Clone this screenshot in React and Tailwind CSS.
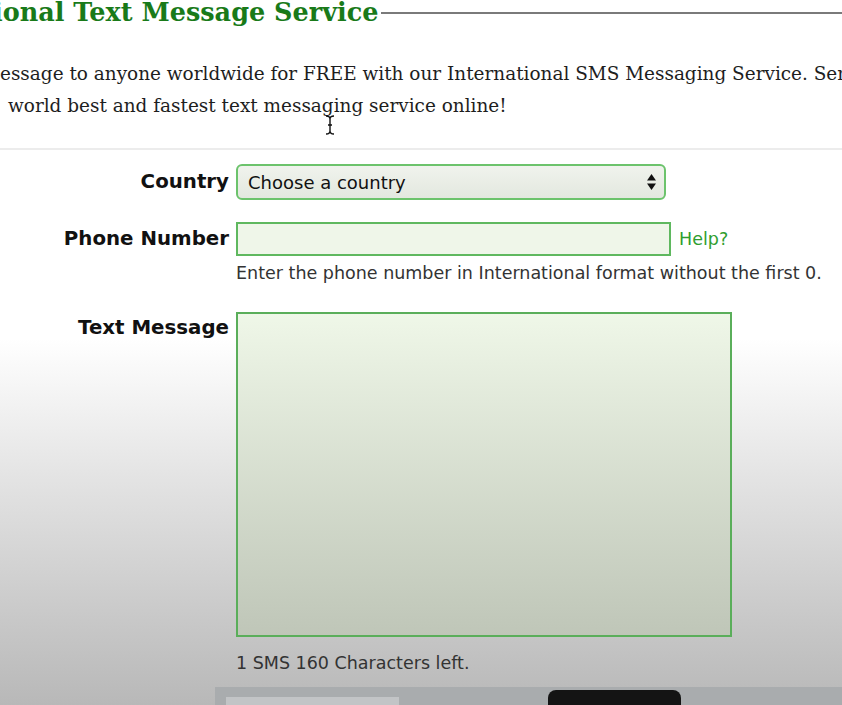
import React from "react";

function SelectArrows() {
  return (
    <svg width="11" height="18" viewBox="0 0 11 18" className="shrink-0">
      <path d="M5.5 1 L10 7.5 L1 7.5 Z" fill="#111" />
      <path d="M5.5 17 L10 10.5 L1 10.5 Z" fill="#111" />
    </svg>
  );
}

function IBeam() {
  return (
    <svg
      width="12"
      height="22"
      viewBox="0 0 12 22"
      className="absolute left-[324px] top-[114px]"
    >
      <path
        d="M2 2 Q6 2 6 5 Q6 2 10 2 M6 5 L6 17 M2 20 Q6 20 6 17 Q6 20 10 20 M4 11 L8 11"
        stroke="#111"
        strokeWidth="1.4"
        fill="none"
      />
    </svg>
  );
}

export default function App() {
  return (
    <div className="relative flex h-[705px] w-full flex-col overflow-hidden bg-linear-to-b from-white from-[48%] to-[#b8b8b8] font-['DejaVu_Sans',sans-serif]">
      {/* Fieldset legend + top border */}
      <div className="flex h-[25px] items-center">
        <h1 className="ml-[-7px] whitespace-nowrap font-['DejaVu_Serif',serif] text-[25.5px] font-bold leading-none text-[#197a19]">
          ional Text Message Service
        </h1>
        <div className="ml-[3px] mt-[1px] h-[2px] flex-1 bg-[#7a7a7a]"></div>
      </div>

      {/* Intro paragraph */}
      <div className="mt-[33px] font-['DejaVu_Serif',serif] text-[18.45px] leading-[32px] text-[#1e1e1e]">
        <p className="whitespace-nowrap">
          essage to anyone worldwide for FREE with our International SMS Messaging Service. Send
        </p>
        <p className="whitespace-nowrap pl-[8px]">
          world best and fastest text messaging service online!
        </p>
      </div>

      <div className="mt-[26px] h-[2px] w-full bg-[#ececec]"></div>

      {/* Form */}
      <div className="mt-[14px] grid grid-cols-[229px_1fr] gap-x-[7px]">
        <label className="flex h-[36px] items-center justify-end text-[19.8px] font-bold text-[#111]">
          Country
        </label>
        <div className="flex h-[36px] w-[430px] items-center justify-between rounded-[6px] border-2 border-[#6cc36c] bg-linear-to-b from-[#f0f3ed] to-[#e3e8df] pl-[10px] pr-[7px] text-[18px] text-[#111]">
          <span>Choose a country</span>
          <SelectArrows />
        </div>

        <label className="mt-[22px] flex h-[34px] items-center justify-end text-[19.8px] font-bold text-[#111]">
          Phone Number
        </label>
        <div className="mt-[22px] flex h-[34px] items-center">
          <div className="h-[34px] w-[435px] border-2 border-[#5fb85f] bg-[#eff6e9]"></div>
          <a className="ml-[8px] text-[17.5px] text-[#2f9e2f]">Help?</a>
        </div>

        <div></div>
        <p className="mt-[7px] text-[17.5px] leading-[21px] text-[#333]">
          Enter the phone number in International format without the first 0.
        </p>

        <label className="mt-[28px] flex justify-end pt-[4px] text-[19.8px] font-bold leading-[24px] text-[#111]">
          Text Message
        </label>
        <div className="mt-[28px] h-[325px] w-[496px] border-2 border-[#5aae5a] bg-linear-to-b from-[#eff7e8] to-[#bfc6b8]"></div>

        <div></div>
        <p className="mt-[16px] text-[17.5px] leading-[21px] text-[#333]">
          1 SMS 160 Characters left.
        </p>
      </div>

      {/* Bottom strip */}
      <div className="ml-[215px] mt-[13px] flex flex-1 items-start bg-[#a9acae]">
        <div className="ml-[11px] mt-[10px] h-full w-[173px] bg-[#c2c4c6]"></div>
        <div className="ml-[149px] mt-[3px] h-full w-[133px] rounded-t-[8px] bg-[#141414]"></div>
      </div>

      <IBeam />
    </div>
  );
}
